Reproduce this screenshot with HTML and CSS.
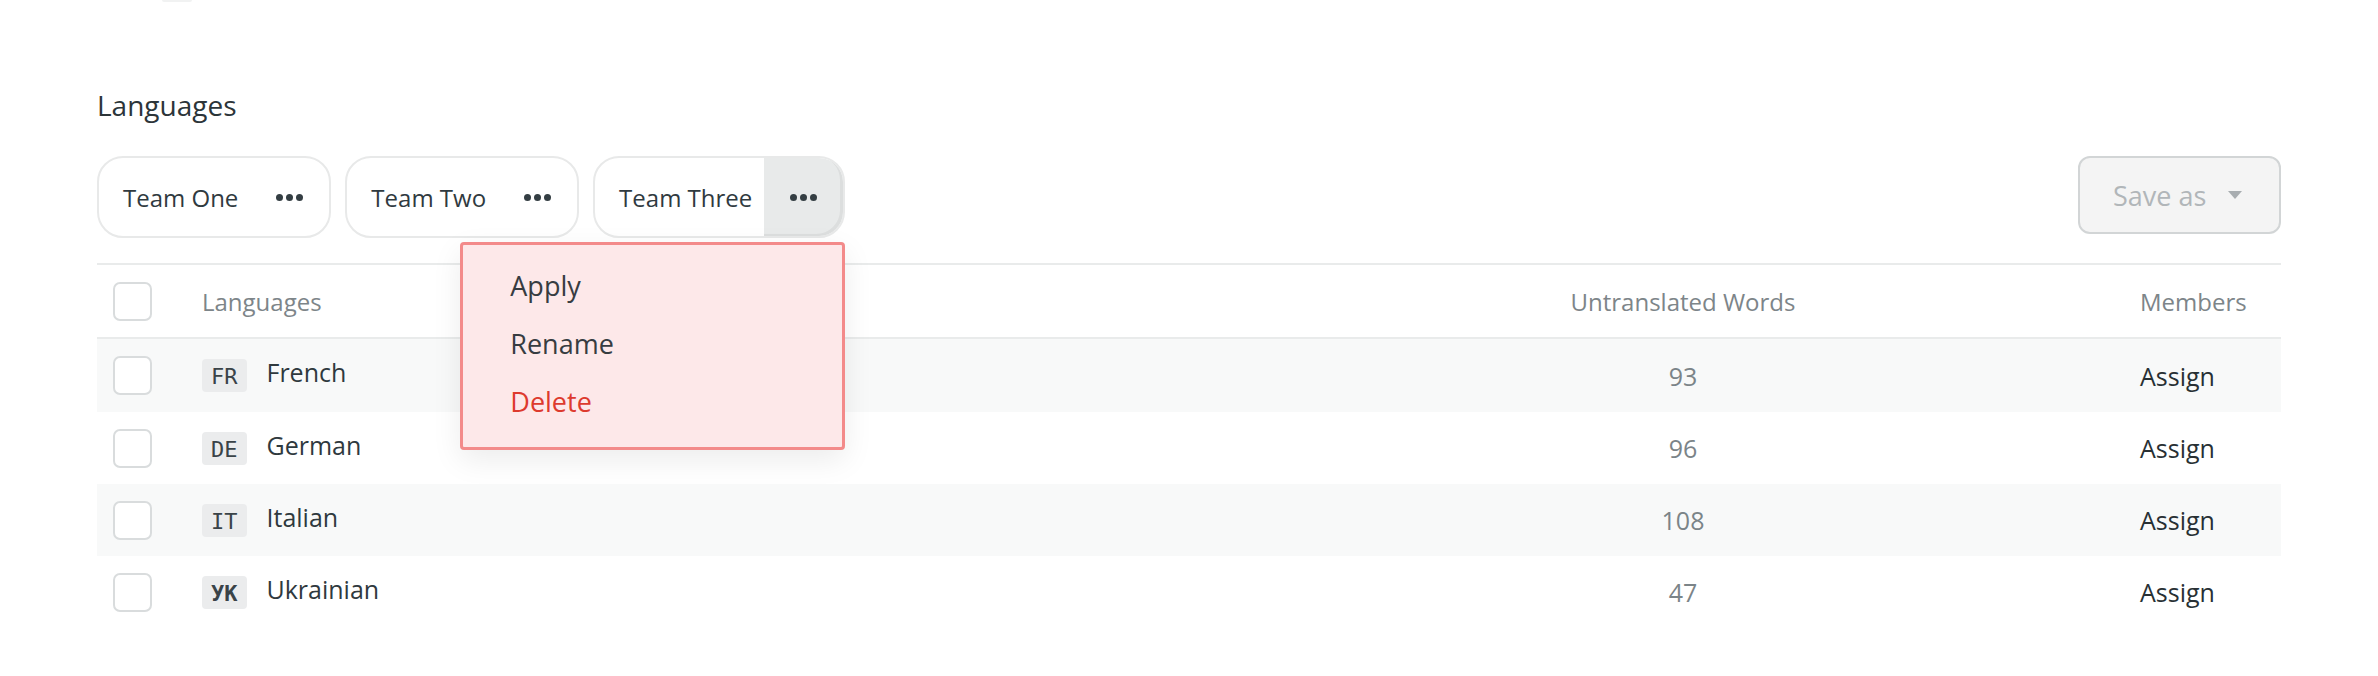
FILE: index.html
```html
<!DOCTYPE html>
<html lang="en">
<head>
<meta charset="utf-8">
<title>Languages</title>
<link rel="stylesheet" href="styles.css">
</head>
<body>
<div class="page">
  <div class="top-stub"></div>
  <h2 class="title">Languages</h2>
  <div class="toolbar">
    <div class="teams">
      <div class="team">
        <span class="team-name">Team One</span>
        <span class="dots"><i></i><i></i><i></i></span>
      </div>
      <div class="team">
        <span class="team-name">Team Two</span>
        <span class="dots"><i></i><i></i><i></i></span>
      </div>
      <div class="team team-open">
        <span class="team-name">Team Three</span>
        <span class="dots dots-active"><i></i><i></i><i></i></span>
        <div class="menu">
          <div class="menu-item">Apply</div>
          <div class="menu-item">Rename</div>
          <div class="menu-item menu-danger">Delete</div>
        </div>
      </div>
    </div>
    <div class="save">Save as <span class="caret"></span></div>
  </div>

  <div class="table">
    <div class="row row-head">
      <div class="cell cell-check"><span class="checkbox"></span></div>
      <div class="cell">Languages</div>
      <div class="cell cell-num">Untranslated Words</div>
      <div class="cell">Members</div>
    </div>
    <div class="row row-alt">
      <div class="cell cell-check"><span class="checkbox"></span></div>
      <div class="cell cell-lang"><span class="badge">FR</span><span class="lang-name">French</span></div>
      <div class="cell cell-num">93</div>
      <div class="cell cell-assign">Assign</div>
    </div>
    <div class="row">
      <div class="cell cell-check"><span class="checkbox"></span></div>
      <div class="cell cell-lang"><span class="badge">DE</span><span class="lang-name">German</span></div>
      <div class="cell cell-num">96</div>
      <div class="cell cell-assign">Assign</div>
    </div>
    <div class="row row-alt">
      <div class="cell cell-check"><span class="checkbox"></span></div>
      <div class="cell cell-lang"><span class="badge">IT</span><span class="lang-name">Italian</span></div>
      <div class="cell cell-num">108</div>
      <div class="cell cell-assign">Assign</div>
    </div>
    <div class="row">
      <div class="cell cell-check"><span class="checkbox"></span></div>
      <div class="cell cell-lang"><span class="badge badge-bold">УК</span><span class="lang-name">Ukrainian</span></div>
      <div class="cell cell-num">47</div>
      <div class="cell cell-assign">Assign</div>
    </div>
  </div>
  <div class="bottom-line"></div>
</div>
</body>
</html>
```

FILE: styles.css
```css
* { box-sizing: border-box; }

html, body {
  margin: 0;
  padding: 0;
  background: #ffffff;
}

body {
  font-family: "Open Sans", "Noto Sans", "Liberation Sans", sans-serif;
  color: #323c41;
  overflow: hidden;
}

.page {
  padding: 0 97px;
  height: 676px;
}

.top-stub {
  width: 30px;
  height: 2px;
  margin-left: 65px;
  background: #f1f2f2;
  border-radius: 0 0 8px 8px;
}

.title {
  margin: 84px 0 32px;
  font-size: 28px;
  line-height: 38px;
  font-weight: 500;
  color: #2c3539;
}

.toolbar {
  display: flex;
  justify-content: space-between;
  align-items: flex-start;
}

.teams {
  display: flex;
  gap: 14px;
}

.team {
  position: relative;
  display: flex;
  align-items: stretch;
  height: 82px;
  border: 2px solid #e8e9e9;
  border-radius: 26px;
  background: #ffffff;
}

.team-name {
  display: flex;
  align-items: center;
  padding: 0 12px 0 24px;
  font-size: 24px;
  color: #303a3f;
}

.dots {
  width: 79px;
  display: flex;
  align-items: center;
  justify-content: center;
  gap: 3px;
  border-radius: 0 24px 24px 0;
}

.dots i {
  display: block;
  width: 7px;
  height: 7px;
  border-radius: 50%;
  background: #343e43;
}

.dots-active {
  background: #e8eaea;
  box-shadow: inset -3px -2px 0 rgba(0, 0, 0, 0.05);
}

.menu {
  position: absolute;
  top: 84px;
  right: -2px;
  width: 385px;
  padding: 12px 0 16px;
  background: #fde8e9;
  border: 3px solid #f38a8a;
  border-radius: 4px;
  box-shadow: 0 10px 30px rgba(0, 0, 0, 0.08);
  z-index: 5;
}

.menu-item {
  padding-left: 47px;
  font-size: 27px;
  line-height: 58px;
  color: #373c41;
}

.menu-danger {
  color: #dd3a2e;
}

.save {
  display: flex;
  align-items: center;
  width: 203px;
  height: 78px;
  padding: 0 0 0 33px;
  background: #f4f4f4;
  border: 2px solid #d2d5d6;
  border-radius: 12px;
  font-size: 27px;
  color: #b1b6b9;
}

.caret {
  display: block;
  width: 0;
  height: 0;
  margin-left: 22px;
  border-left: 7px solid transparent;
  border-right: 7px solid transparent;
  border-top: 8px solid #a8adb0;
}

.table {
  margin-top: 25px;
  border-top: 2px solid #e9ebeb;
}

.row {
  display: grid;
  grid-template-columns: 105px 1fr 914px 141px;
  align-items: center;
  height: 72px;
  font-size: 25px;
}

.row-head {
  height: 74px;
  border-bottom: 2px solid #e9ebeb;
  font-size: 24px;
  color: #7d8589;
}

.row-alt {
  background: #f8f9f9;
}

.row:nth-child(2) {
  height: 73px;
}

.cell-check {
  padding-left: 16px;
  display: flex;
  align-items: center;
}

.checkbox {
  display: block;
  width: 39px;
  height: 39px;
  border: 2px solid #d9dcdd;
  border-radius: 7px;
  background: #ffffff;
}

.cell-lang {
  display: flex;
  align-items: center;
  gap: 20px;
  color: #2f393e;
}

.badge {
  display: block;
  height: 33px;
  padding: 0 9px;
  line-height: 35px;
  font-family: "DejaVu Sans Mono", "Liberation Mono", monospace;
  font-size: 22px;
  color: #3a4348;
  background: #ebeced;
  border-radius: 4px;
}

.badge-bold {
  font-weight: 700;
}

.lang-name {
  margin-bottom: 7px;
}

.cell-num {
  text-align: center;
  color: #7b8488;
}

.row-head .cell-num {
  color: #7d8589;
}

.cell-assign {
  font-weight: 500;
  color: #283034;
}

.bottom-line {
  margin: 48px 0 0 13px;
  height: 1px;
  background: #eff0f0;
}
```
